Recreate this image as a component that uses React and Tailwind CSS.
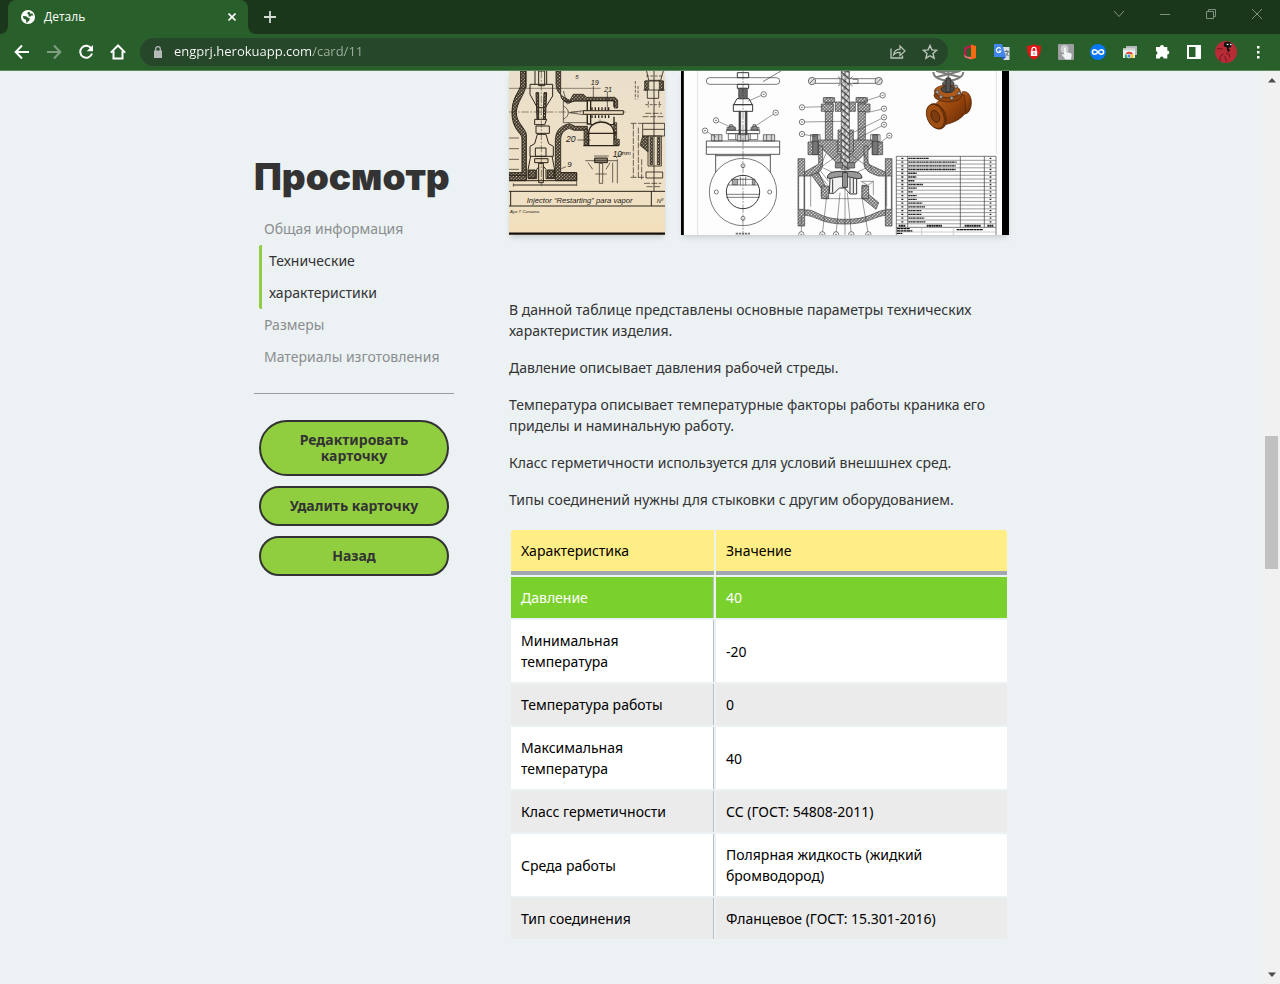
import React from "react";

const toolButton = "flex h-8 w-8 shrink-0 items-center justify-center";

function TabStrip() {
  return (
    <div className="flex h-[34px] items-stretch bg-[#1b371b]">
      <svg className="h-2 w-2 self-end" viewBox="0 0 8 8" aria-hidden="true">
        <path d="M8 0v8H0a8 8 0 0 0 8-8z" fill="#295f2b" />
      </svg>
      <div className="flex w-60 items-center rounded-t-lg bg-[#295f2b] pr-2 pl-[13px] text-white">
        <svg className="h-[14px] w-[14px] shrink-0" viewBox="0 0 14 14" aria-hidden="true">
          <circle cx="7" cy="7" r="7" fill="#fff" />
          <path d="M1.800 6l3.400.2 1.800 1.600 1.800.4-.4 2.200-1.600 1.200-.4 1.200-1.200-.4-.2-2.600-2.400-1z M7.200 1.800l-1 1.800 1.600 1.400-.4 1.200 2 .6 1-1.400 1.800.2-.6-2-2.200.2-.4-1.600z" fill="#295f2b" />
        </svg>
        <span className="ml-[9px] flex-1 font-['Open_Sans','Noto_Sans',sans-serif] text-xs">Деталь</span>
        <button type="button" aria-label="Закрыть вкладку" className="flex h-4 w-4 items-center justify-center">
          <svg className="h-2 w-2" viewBox="0 0 8 8" fill="none" stroke="#fff" strokeWidth="1.6">
            <path d="M.5.5l7 7M7.500.5l-7 7" />
          </svg>
        </button>
      </div>
      <svg className="h-2 w-2 self-end" viewBox="0 0 8 8" aria-hidden="true">
        <path d="M0 0v8h8a8 8 0 0 1-8-8z" fill="#295f2b" />
      </svg>
      <button type="button" aria-label="Новая вкладка" className="flex w-7 items-center justify-center">
        <svg className="h-3 w-3" viewBox="0 0 12 12" stroke="#d5ddd5" strokeWidth="1.8">
          <path d="M6 0v12M0 6h12" />
        </svg>
      </button>
      <div className="flex-1" />
      <WindowButton label="Поиск вкладок"><path d="M2 4l5 5.500L12 4" /></WindowButton>
      <WindowButton label="Свернуть"><path d="M2 7.500h10" /></WindowButton>
      <WindowButton label="Развернуть"><path d="M2.500 4.500h7v7h-7zM4.500 4.500v-2h7v7h-2" /></WindowButton>
      <WindowButton label="Закрыть"><path d="M2 2l10 10M12 2L2 12" /></WindowButton>
    </div>
  );
}

function WindowButton({ label, children }) {
  return (
    <button type="button" aria-label={label} className="flex h-7 w-[46px] items-center justify-center">
      <svg className="h-3.5 w-3.5" viewBox="0 0 14 14" fill="none" stroke="#7f917f" strokeWidth="1">{children}</svg>
    </button>
  );
}

function ToolIcon({ label, children, size = "h-4 w-4" }) {
  return (
    <button type="button" aria-label={label} className={toolButton}>
      <svg className={size} viewBox="0 0 16 16" fill="none">{children}</svg>
    </button>
  );
}

function Toolbar() {
  return (
    <div className="flex h-9 items-center bg-[#295f2b] px-1.5">
      <ToolIcon label="Назад"><path d="M15 8H2M8 1.500L1.700 8 8 14.500" stroke="#fff" strokeWidth="2" /></ToolIcon>
      <ToolIcon label="Вперёд"><path d="M1 8h13M8 1.500L14.300 8 8 14.500" stroke="#7f9f80" strokeWidth="2" /></ToolIcon>
      <ToolIcon label="Обновить">
        <path d="M13.300 4.500A6 6 0 1 0 14 9.500" stroke="#fff" strokeWidth="2" />
        <path d="M15 1v6.300H8.700z" fill="#fff" />
      </ToolIcon>
      <ToolIcon label="Домашняя страница"><path d="M.8 8.600L8 1.500l7.200 7.100M3.500 7v7.500h9V7" stroke="#fff" strokeWidth="2" /></ToolIcon>
      <div className="ml-1.5 flex h-7 min-w-0 flex-1 items-center rounded-full bg-[#27472a] pr-0.5 pl-3">
        <svg className="h-3 w-3 shrink-0" viewBox="0 0 12 12" aria-hidden="true">
          <path d="M2 4.500h8V12H2z" fill="#b5b9b8" />
          <path d="M3.700 5V3a2.300 2.300 0 0 1 4.600 0v2" fill="none" stroke="#b5b9b8" strokeWidth="1.300" />
        </svg>
        <input
          aria-label="Адресная строка"
          defaultValue="engprj.herokuapp.com/card/11"
          className="ml-2.5 min-w-0 flex-1 bg-[linear-gradient(90deg,#fff_139px,#9fb3a0_139px)] bg-clip-text font-['Open_Sans','Noto_Sans',sans-serif] text-[13px] text-transparent outline-none"
        />
        <ToolIcon label="Поделиться">
          <path d="M1 4.500V14h11.500v-2.500" stroke="#b9c4b9" strokeWidth="1.300" />
          <path d="M3.500 11c.5-4 3-5.800 6.500-5.900V2l5 5-5 4.700V8.400C7.500 8.300 5 9 3.500 11z" stroke="#b9c4b9" strokeWidth="1.200" />
        </ToolIcon>
        <ToolIcon label="Добавить в закладки">
          <path d="M8 1.500l1.900 4.400 4.800.4-3.700 3.200 1.100 4.700L8 11.700l-4.100 2.500L5 9.500 1.300 6.300l4.800-.4z" stroke="#b9c4b9" strokeWidth="1.400" />
        </ToolIcon>
      </div>
      <div className="ml-1.5 flex items-center">
        <ToolIcon label="Office">
          <path d="M9.500.5L2 3.700v7.800l2.500 1.300V5.200L9.500 3.500z" fill="#b3204b" />
          <path d="M1.500 10.500l3 2L9.500 13v2.500L3 13.500z" fill="#f0707a" />
          <path d="M9 .5l5 1.500v12L9 15.500z" fill="#f46a13" />
        </ToolIcon>
        <ToolIcon label="Переводчик">
          <path d="M7 3h8.500v13H9z" fill="#d8dfe3" />
          <path d="M0 0h8l4 13H0z" fill="#4187ee" />
          <path d="M7.300 13H12l-3 3z" fill="#2958bd" />
          <path d="M6.800 4.800A2.400 2.400 0 1 0 7 7H4.800" stroke="#fff" strokeWidth="1.200" />
          <path d="M10.500 7.500h4.500M12.700 6v1.500M14 8c-.5 2-1.500 3-2.500 4M11.500 9l3 3" stroke="#61727d" strokeWidth="1" />
        </ToolIcon>
        <ToolIcon label="Блокировщик">
          <path d="M8 .3c2 1.200 4.500 1.500 7 1.500 0 7-1 11-7 14-6-3-7-7-7-14 2.500 0 5-.3 7-1.500z" fill="#e31414" />
          <path d="M4.800 7h6.400v5H4.800z" fill="#fff" />
          <path d="M6 7.500V5.300a2 2 0 0 1 4 0v2.200" stroke="#fff" strokeWidth="1.300" />
          <path d="M8 8.500v2" stroke="#e31414" />
        </ToolIcon>
        <ToolIcon label="Автокликер">
          <rect width="16" height="16" rx="1" fill="#9b9d9e" />
          <circle cx="6.500" cy="5" r="4" fill="#c9cccd" />
          <path d="M6 4.500c0-1.200 2-1.200 2 0V8l5 1.300c1 .4.800 3-.2 6.200H7.500L4 11c-.5-1 .7-1.400 2-.3z" fill="#eef3f6" />
        </ToolIcon>
        <ToolIcon label="Бесконечность">
          <circle cx="8" cy="8" r="8" fill="#0878f6" />
          <path d="M8 8C6.500 6 5.500 5.700 4.700 5.700a2.300 2.300 0 0 0 0 4.600C5.500 10.300 6.500 10 8 8s2.500-2.300 3.300-2.300a2.300 2.300 0 0 1 0 4.600C10.500 10.300 9.500 10 8 8z" stroke="#fff" strokeWidth="1.500" />
        </ToolIcon>
        <ToolIcon label="Магазин">
          <path d="M4 2h11v9H4z" fill="#b5b9bb" />
          <path d="M1 4.500h12V14H1z" fill="#eef0f1" />
          <path d="M1 4.500h12v1.800H1z" fill="#ced2d5" />
          <path d="M3 14a4.200 4.200 0 0 1 .7-4.200L5.500 12v2z" fill="#2da94f" />
          <path d="M3.500 10a4.200 4.200 0 0 1 7.500 0z" fill="#e33b2e" />
          <path d="M8 10h3a4.200 4.200 0 0 1 0 4H7z" fill="#fbc116" />
          <circle cx="7" cy="12" r="1.900" fill="#4285f4" stroke="#fff" strokeWidth=".6" />
        </ToolIcon>
        <ToolIcon label="Расширения">
          <path d="M6 3a2 2 0 0 1 4 0h3.300v3.500a2 2 0 0 1 0 4V14.500H9.700a1.900 1.900 0 0 0-3.800 0H2v-3.700a1.900 1.900 0 0 0 0-3.700V3z" fill="#fff" />
        </ToolIcon>
        <ToolIcon label="Боковая панель">
          <path d="M1 1h14v14H1z" fill="#fff" />
          <path d="M3 3h6.500v10H3z" fill="#295f2b" />
        </ToolIcon>
        <ToolIcon label="Профиль" size="h-[22px] w-[22px]">
          <circle cx="8" cy="8" r="8" fill="#b82c36" />
          <path d="M6.500 1.500c2-1.500 5-1 6 1l-1 2-2 .5 1.500 1.500-1 1.500L9 7.500 8.500 4.500 6.500 4z" fill="#111" />
          <path d="M8.500 2.400h1.300M11 2.300l1 .5" stroke="#fff" strokeWidth=".9" />
          <path d="M1.500 5.500l4 .3M6 9.500c-2 1-3 3-2 5M8 9c2 0 3 1 2.500 3M7 11l1.500 4" stroke="#7d1a24" strokeWidth=".9" />
        </ToolIcon>
        <ToolIcon label="Меню">
          <path d="M7 2h2.500v2.500H7zM7 7h2.500v2.500H7zM7 12h2.500v2.500H7z" fill="#fff" />
        </ToolIcon>
      </div>
    </div>
  );
}

function InjectorDrawing() {
  return (
    <svg role="img" aria-label="Чертёж инжектора" className="h-[164px] w-[156px] shrink-0 shadow-md" viewBox="27 15 468 492" fill="none" stroke="#2b241b" strokeWidth="3">
      <defs>
        <pattern id="inkHatch" width="7" height="7" patternUnits="userSpaceOnUse" patternTransform="rotate(45)">
          <rect width="7" height="7" fill="#ead9bb" />
          <path d="M0 0v7" stroke="#3a3226" strokeWidth="3" />
        </pattern>
        <linearGradient id="paper" x1="0" y1="0" x2="0" y2="1">
          <stop offset="0" stopColor="#eadfca" />
          <stop offset=".8" stopColor="#f0e1c5" />
          <stop offset="1" stopColor="#f3dfb8" />
        </linearGradient>
      </defs>
      <path d="M27 15h468v492H27z" fill="url(#paper)" stroke="none" />
      <path d="M27 503h468" stroke="#14100c" strokeWidth="7" />
      {/* housing */}
      <path d="M62 15v40c0 20-26 35-26 85s28 60 30 75v105H27v24h52V205c-4-20-30-35-30-65s28-60 28-80V15z" fill="url(#inkHatch)" />
      <path d="M168 15v40c0 25 22 40 42 48l10-18h30l10 9h84l9 8v24h-10v-22H224l-18 8c-28-10-24-24-24-44V15z" fill="url(#inkHatch)" strokeWidth="2.500" />
      <path d="M166 344V225c0-28 12-45 42-52l18 8h36v12h-40l-14-6c-18 6-26 16-26 38v95h48v24z" fill="url(#inkHatch)" strokeWidth="2.500" />
      <path d="M342 170h8v50h8v18h-12v-14h-8z" fill="url(#inkHatch)" strokeWidth="2" />
      <path d="M252 190h12v48h-12z" fill="url(#inkHatch)" strokeWidth="2" />
      <path d="M79 15v50M27 216h30M27 248h30M27 280h30M27 310h30" strokeWidth="2" />
      {/* nozzle column */}
      <path d="M90 55h68v35l-22 35h-24L90 85zM105 15v40M140 15v40" />
      <path d="M108 80h8v80h-5zM132 80h8l-4 80h-6z" fill="url(#inkHatch)" />
      <path d="M116 15h18v44h-18zM104 160h36l-6 16h-30zM108 180h40v22h-40zM112 205h26l8 28 14 8v30H90v-30l14-8zM106 246h32v25h-32z" />
      <path d="M92 270l-8 42v26h26v-28l14-16 14 16v28h26v-26l-8-42" />
      <path d="M86 312h20v24H86zM142 312h20v24h-20z" fill="url(#inkHatch)" />
      <path d="M104 278h40v12h-40zM116 292h14v58h-14z" fill="#ead9bb" />
      <path d="M124 15v345M27 138h350" strokeWidth="1.500" strokeDasharray="22 5 5 5" />
      <path d="M27 67h275M300 160v20" strokeWidth="1.500" />
      {/* side cylinder */}
      <path d="M190 106h72v64h-72zM208 140l42-6M208 140l42 6M190 120c20 10 20 30 0 40" strokeWidth="2" />
      <path d="M262 104h10v70h-10zM272 104h70v18M272 176h70v-24" strokeWidth="4" />
      <path d="M250 134h120v11H250z" fill="#ead9bb" />
      <path d="M276 124v8M286 124v8M296 124v8M306 124v8M316 124v8M326 124v8M276 148v8M286 148v8M296 148v8M306 148v8M316 148v8M326 148v8" strokeWidth="4" />
      <path d="M266 202c0-22 18-34 38-34s38 12 38 34v37h-76zM260 202h90M250 239h106" fill="#efe1c7" strokeWidth="4" />
      <path d="M27 328h52M27 344h203M184 320h46v24M40 357h190" />
      <path d="M230 344v16M40 352v10" strokeWidth="2" />
      {/* small bolt */}
      <path d="M284 276h38v14h-38z" fill="#8e8270" />
      <path d="M298 292h10v60h-10zM286 324h34M256 284h96M282 270h44M338 290v60M352 280v72" strokeWidth="2" />
      <path d="M348 276l22-18M184 308l14-6M190 75l12 40M280 60v35M322 78v55M232 222h40" strokeWidth="2" />
      <path d="M264 290l14 20M330 290l-12 20" strokeWidth="2" />
      {/* right details */}
      <path d="M440 15l6 28h36l8-28M436 45h54v28h-14v24h-34V73h-6zM430 72h64M462 15v360" strokeWidth="2.500" />
      <path d="M434 45h12v26h-12zM478 45h12v26h-12z" fill="url(#inkHatch)" strokeWidth="2" />
      <path d="M406 45v55M414 60v40M436 116h50M445 106v18M478 106v18M438 30h50" strokeWidth="2" strokeDasharray="9 4" />
      <path d="M428 172h66v38h-66zM444 210h40v90h-40zM430 190h64M438 318h50v18h-50z" strokeWidth="2.500" />
      <path d="M428 210l-8 28 24 20v-48zM450 214h8v82h-8zM472 214h8v82h-8z" fill="url(#inkHatch)" strokeWidth="2" />
      <path d="M400 172v162M392 172h36M392 334h44M415 185v150M425 280v60M428 152h66M436 142h50M432 352h52M440 362h40" strokeWidth="2" strokeDasharray="18 4" />
      {/* title block */}
      <path d="M27 376h468M27 420h468M32 376v44M454 376v44" strokeWidth="3" />
      <g fill="#1f1a14" stroke="none" className="font-['Liberation_Sans',sans-serif] italic">
        <text x="80" y="412" fontSize="23">Injector “Restarting” para vapor</text>
        <text x="470" y="411" fontSize="18">Nº</text>
        <text x="272" y="56" fontSize="22">19</text>
        <text x="312" y="78" fontSize="22">21</text>
        <text x="198" y="228" fontSize="26">20</text>
        <text x="202" y="304" fontSize="24">9</text>
        <text x="338" y="272" fontSize="25">10ᵐᵐ</text>
        <text x="226" y="40" fontSize="18">5</text>
        <text x="30" y="440" fontSize="13">Ayo T Caruana</text>
      </g>
    </svg>
  );
}

function Balloon({ x, y, to }) {
  return (
    <>
      <path d={`M${x} ${y}L${to[0]} ${to[1]}`} strokeWidth="1.5" />
      <circle cx={x} cy={y} r="8" fill="#fff" strokeWidth="2" />
      <path d={`M${x - 3} ${y}h6`} />
    </>
  );
}

const partRows = [62, 145, 142, 142, 26, 24, 18, 44, 26, 14, 26, 26, 42, 50, 40, 40, 48, 52];

function ValveSection() {
  return (
    <g transform="translate(345 0)">
      <path d="M68 38h82v14H68M178 38h82v14h-82" strokeWidth="2" />
      <circle cx="66" cy="45" r="11" fill="#ddd" />
      <circle cx="266" cy="45" r="11" fill="#ddd" />
      <path d="M60 51l12-12M260 51l12-12M144 32l10 8v12l-10 8M188 32l-10 8v12l10 8M188 40h16v12h-16" />
      <path d="M106 95h22v146h-22zM204 95h22v146h-22z" fill="url(#section)" />
      <path d="M94 114h36v22H94zM204 114h36v22h-36zM136 108h18v28h-18zM178 108h18v28h-18z" fill="url(#section)" />
      <path d="M100 95h34v14h-34zM198 95h34v14h-34zM54 228h32v38H54zM246 228h32v38h-32z" fill="url(#section)" />
      <path d="M68 206h16v60H68zM248 206h16v60h-16z" fill="#777" />
      <path d="M62 206h28v20H62zM242 206h28v20h-28z" />
      <path d="M86 222h56v40h10v30h24v-30h12v-40h58v18l-10 12-48 46h-40L100 252l-14-12z" fill="url(#section)" />
      <path d="M144 192h14v66h-14zM176 192h14v66h-14z" fill="url(#section)" />
      <path d="M154 15h24v295h-24z" fill="url(#stem)" />
      <path d="M136 290h22v16h-22zM172 290h22v16h-22z" fill="#888" />
      <path d="M24 278h20v202H24zM286 278h20v202h-20z" fill="url(#section)" />
      <path d="M86 240v54L44 318v12h18c28-8 36-20 36-36v-54zM234 240v54l52 24v12h-20c-28-8-44-20-44-36v-54z" fill="url(#section)" />
      <path d="M26 330h16v100H26zM304 330h-16v100h16z" fill="#fff" />
      <path d="M62 330v92M290 330v92" strokeWidth="1.500" />
      <path d="M44 432c36-4 42 28 120 28s86-24 122-28v16c-36 4-50 26-122 26S76 448 44 448z" fill="url(#section)" />
      <path d="M64 326l22-6 20 40v30H94v-22zM216 358h14v22l36 30-8 20-42-34z" fill="url(#section)" />
      <path d="M78 316l34 40M92 316l24 30M212 346h38v42M216 348l18 10 16-12M108 262L84 320M222 262l24 50M98 300l50-36M230 300l-50-36M100 306l30 14M228 306l-30 14" strokeWidth="1.500" />
      <path d="M112 336c0-20 26-20 52-20s52 0 52 20l-22 3c-20-6-40-6-60 0z" fill="#999" strokeWidth="3" />
      <path d="M120 338l-2 44h14l16-16h16l16 18h20v-46c-26-8-54-8-80 0z" fill="#f1f1f1" strokeWidth="3" />
      <path d="M128 340v40M180 336v46M190 336v46M158 320h14v44h-14z" fill="#aaa" strokeWidth="3" />
      <path d="M94 360h22v38H94zM216 360h20v38h-20z" fill="url(#section)" />
      <path d="M102 398h124M165 15v492" strokeWidth="1.500" />
      <Balloon x={36} y={124} to={[98, 122]} />
      <Balloon x={36} y={168} to={[154, 166]} />
      <Balloon x={36} y={204} to={[76, 212]} />
      <Balloon x={278} y={88} to={[222, 106]} />
      <Balloon x={282} y={128} to={[222, 142]} />
      <Balloon x={282} y={154} to={[180, 204]} />
      <Balloon x={282} y={176} to={[200, 220]} />
      <Balloon x={298} y={209} to={[266, 234]} />
      <Balloon x={34} y={505} to={[34, 450]} />
      <Balloon x={97} y={505} to={[110, 390]} />
      <Balloon x={138} y={505} to={[150, 380]} />
      <Balloon x={184} y={505} to={[172, 380]} />
      <Balloon x={235} y={505} to={[215, 390]} />
    </g>
  );
}

function ValveDrawing() {
  return (
    <svg role="img" aria-label="Чертёж клапана" className="h-[164px] w-[328px] shrink-0 shadow-md" viewBox="18 15 984 492" fill="none" stroke="#3a3a3a" strokeWidth="2">
      <defs>
        <pattern id="section" width="7" height="7" patternUnits="userSpaceOnUse" patternTransform="rotate(45)">
          <rect width="7" height="7" fill="#fff" />
          <path d="M0 0v7" stroke="#666" strokeWidth="3" />
        </pattern>
        <pattern id="stem" width="14" height="14" patternUnits="userSpaceOnUse" patternTransform="rotate(-50)">
          <rect width="14" height="14" fill="#e6e6e6" />
          <path d="M0 0v14" stroke="#333" strokeWidth="5" />
        </pattern>
        <linearGradient id="bronze" x1="0" y1="0" x2="1" y2="1">
          <stop offset="0" stopColor="#b8611e" />
          <stop offset=".5" stopColor="#94430d" />
          <stop offset="1" stopColor="#5e2704" />
        </linearGradient>
      </defs>
      <path d="M18 15h984v492H18z" fill="#fdfdfd" stroke="none" />
      <path d="M22 15v492" stroke="#000" strokeWidth="9" />
      <path d="M992 15v492" stroke="#000" strokeWidth="22" />
      <path d="M68 15v492M964 15v250" stroke="#d4d4d4" />
      {/* front view */}
      <rect x="94" y="35" width="220" height="20" rx="10" />
      <path d="M187 20h34v15h-34zM187 55h34v12h-34zM186 98h36l10 18h-56zM175 116h58v20h-58z" strokeWidth="3" />
      <path d="M191 67h26v31h-26z" fill="#666" />
      <path d="M192 136h5v70h-5zM211 136h5v70h-5z" fill="#444" />
      <path d="M154 193h100v10H154zM160 203h88v18h-88zM182 203v18M226 203v18M156 184h26v8h-26zM228 184h24v8h-24zM164 176h8v8h-8zM234 176h8v8h-8z" />
      <path d="M156 192l8-12h12l6 12zM228 192l6-12h10l6 12z" fill="#888" />
      <path d="M109 206h32v19h-32zM187 206h34v19h-34zM265 206h34v19h-34z" fill="#d9d9d9" />
      <path d="M118 206v19M131 206v19M197 206v19M211 206v19M275 206v19M289 206v19" />
      <path d="M94 225h220v40H94zM94 243h220M122 265v60M286 265v60M122 269h164" strokeWidth="2.500" />
      <circle cx="204" cy="378" r="101" fill="#fff" />
      <circle cx="204" cy="378" r="50" strokeWidth="3" />
      <path d="M158 357h92M154 385h100M154 394h100M196 332v26M212 332v26M168 340h72" />
      <path d="M172 340h16v16h-16zM232 340h8v16h-8z" fill="#aaa" />
      <circle cx="204" cy="299" r="6" /><circle cx="204" cy="457" r="6" /><circle cx="124" cy="378" r="6" /><circle cx="284" cy="378" r="6" />
      <path d="M204 15v492" strokeWidth="1.500" strokeDasharray="26 4 6 4" />
      <path d="M264 47l54-32" />
      <Balloon x={266} y={85} to={[218, 106]} />
      <Balloon x={302} y={140} to={[238, 182]} />
      <Balloon x={123} y={163} to={[168, 184]} />
      <Balloon x={90} y={194} to={[124, 214]} />
      <path d="M182 503h44" strokeWidth="5" strokeDasharray="7 2" stroke="#777" />
      <ValveSection />
      {/* shaded model */}
      <g transform="translate(495 0)">
        <path d="M280 18c0 34 88 34 90 0M288 15l74 0M325 15v60M288 34l70-18M362 34l-70-18" stroke="#7b7d79" strokeWidth="6" />
        <path d="M308 50l10-8h14l10 8v36h-34z" fill="#62625f" stroke="#2c2c2c" />
        <path d="M366 78c16-6 30 12 28 36s-16 34-24 28z" fill="url(#bronze)" stroke="#4a2004" />
        <path d="M290 110c20-20 66-30 84-22l4 50c-14 24-44 36-82 42z" fill="url(#bronze)" stroke="#4a2004" />
        <ellipse cx="324" cy="88" rx="42" ry="20" fill="#8c430f" stroke="#4a2004" />
        <ellipse cx="322" cy="76" rx="39" ry="19" fill="#ad5a1c" stroke="#4a2004" />
        <ellipse cx="323" cy="70" rx="20" ry="10" fill="#4d4c47" stroke="#222" />
        <path d="M318 36h13v42h-13z" fill="#565653" stroke="#222" />
        <ellipse cx="290" cy="151" rx="27" ry="40" transform="rotate(-22 290 151)" fill="#7a380b" stroke="#4a2004" />
        <ellipse cx="286" cy="151" rx="25" ry="38" transform="rotate(-22 286 151)" fill="#a04f14" stroke="#4a2004" />
        <ellipse cx="286" cy="151" rx="12" ry="19" transform="rotate(-22 286 151)" fill="#7d3c10" stroke="#3a1a05" />
        <circle cx="292" cy="78" r="5" fill="#aaa" /><circle cx="303" cy="92" r="5" fill="#aaa" /><circle cx="335" cy="96" r="5" fill="#aaa" /><circle cx="357" cy="82" r="5" fill="#aaa" /><circle cx="348" cy="62" r="5" fill="#aaa" />
        {/* parts list */}
        <path d="M169 271h299M169 484h299M169 271v236M203 271v213M361 271v213M433 271v213M468 271v236" strokeWidth="2" />
        {partRows.map((length, i) => (
          <g key={i}>
            <path d={`M169 ${283 + i * 11.2}h299`} strokeWidth="1.5" />
            <path d={`M205 ${277 + i * 11.2}h${length}`} stroke="#222" strokeWidth="4" strokeDasharray="7 1 4 1" />
            <path d={`M184 ${277 + i * 11.2}h6M449 ${277 + i * 11.2}h5`} stroke="#222" strokeWidth="4" />
          </g>
        ))}
        <path d="M176 479h20M260 479h46M374 479h48M442 479h18" strokeWidth="6" strokeDasharray="6 1" stroke="#222" />
        <path d="M171 488h38M171 495h46M171 502h16M350 491h78" strokeWidth="4" strokeDasharray="9 1" stroke="#111" />
        <path d="M245 484v23M340 484v23M169 498h299" stroke="#bbb" />
      </g>
    </svg>
  );
}

const sections = [
  { href: "#general", label: "Общая информация" },
  { href: "#technical", label: "Технические характеристики", active: true },
  { href: "#sizes", label: "Размеры" },
  { href: "#materials", label: "Материалы изготовления" },
];

const actions = ["Редактировать карточку", "Удалить карточку", "Назад"];

function Sidebar() {
  return (
    <aside className="w-[200px] shrink-0 pt-[84px]">
      <h1 className="font-['Inter',sans-serif] text-[37px] leading-[44px] font-black text-[#333]">Просмотр</h1>
      <nav className="mt-3.5 px-[5px] leading-8">
        {sections.map((s) => (
          <a
            key={s.href}
            href={s.href}
            className={s.active ? "block rounded-xs border-l-[3px] border-[#91ce3f] pr-4 pl-[7px] text-[#333]" : "block pl-[5px] text-[#8b8e8f]"}
          >
            {s.label}
          </a>
        ))}
      </nav>
      <hr className="mt-5 border-t-[#9a9c9d]" />
      <div className="mt-[26px] flex flex-col gap-2.5 px-[5px]">
        {actions.map((label) => (
          <button key={label} type="button" className="rounded-[28px] border-2 border-[#333] bg-[#91ce3f] px-6 py-[10px] leading-4 font-bold text-[#333]">
            {label}
          </button>
        ))}
      </div>
    </aside>
  );
}

const paragraphs = [
  "В данной таблице представлены основные параметры технических характеристик изделия.",
  "Давление описывает давления рабочей стреды.",
  "Температура описывает температурные факторы работы краника его приделы и наминальную работу.",
  "Класс герметичности используется для условий внешшнех сред.",
  "Типы соединений нужны для стыковки с другим оборудованием.",
];

const rows = [
  ["Давление", "40"],
  ["Минимальная температура", "-20"],
  ["Температура работы", "0"],
  ["Максимальная температура", "40"],
  ["Класс герметичности", "СС (ГОСТ: 54808-2011)"],
  ["Среда работы", "Полярная жидкость (жидкий бромводород)"],
  ["Тип соединения", "Фланцевое (ГОСТ: 15.301-2016)"],
];

function rowStyle(i) {
  if (i === 0) return "bg-[#7bd12b] text-white";
  return i % 2 ? "bg-white" : "bg-[#ebebeb]";
}

function Specification() {
  return (
    <table className="mt-[18px] w-full table-fixed border-separate border-spacing-[2px] text-left leading-[21px] text-black">
      <thead>
        <tr>
          <th scope="col" className="w-[203px] rounded-tl-[3px] border-b-4 border-[#a0a7b3] bg-[#ffed86] p-2.5 font-normal">Характеристика</th>
          <th scope="col" className="rounded-tr-[3px] border-b-4 border-[#a0a7b3] bg-[#ffed86] p-2.5 font-normal">Значение</th>
        </tr>
      </thead>
      <tbody>
        {rows.map(([name, value], i) => (
          <tr key={name}>
            <td className={`border-r border-[#b9bec9] py-2.5 pr-8 pl-2.5 ${rowStyle(i)}`}>{name}</td>
            <td className={`py-2.5 pr-12 pl-2.5 ${rowStyle(i)}`}>{value}</td>
          </tr>
        ))}
      </tbody>
    </table>
  );
}

function Scrollbar() {
  return (
    <div className="flex w-[17px] shrink-0 flex-col items-center bg-[#f1f1f1]" aria-hidden="true">
      <svg className="h-[18px] w-2" viewBox="0 0 8 18"><path d="M0 11.500L4 7l4 4.500z" fill="#4a4a4a" /></svg>
      <div className="flex-[347]" />
      <div className="w-[13px] flex-[133] bg-[#c1c1c1]" />
      <div className="flex-[397]" />
      <svg className="h-[18px] w-2" viewBox="0 0 8 18"><path d="M0 6.500L4 11l4-4.500z" fill="#4a4a4a" /></svg>
    </div>
  );
}

export default function App() {
  return (
    <div className="flex min-h-screen flex-col bg-[#ecf1f4]">
      <header className="border-b border-[#5b8a5d]">
        <TabStrip />
        <Toolbar />
      </header>
      <div className="flex flex-1">
        <main className="flex flex-1 justify-center gap-[55px] font-['Noto_Sans',sans-serif] text-sm">
          <Sidebar />
          <article className="w-[500px] text-[#333]">
            <div className="flex gap-4">
              <InjectorDrawing />
              <ValveDrawing />
            </div>
            <div className="mt-16 flex flex-col gap-4 leading-[21px]">
              {paragraphs.map((text) => <p key={text}>{text}</p>)}
            </div>
            <Specification />
          </article>
        </main>
        <Scrollbar />
      </div>
    </div>
  );
}
